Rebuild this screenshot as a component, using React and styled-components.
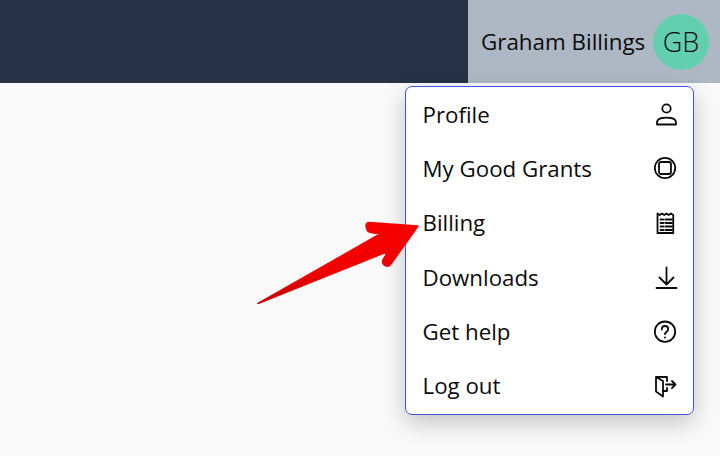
import React from 'react';
import styled, { createGlobalStyle } from 'styled-components';

const GlobalStyle = createGlobalStyle`
  html, body {
    margin: 0;
    padding: 0;
    height: 100%;
    overflow: hidden;
    background: #fafafa;
  }
  body {
    font-family: "Open Sans", "Noto Sans", sans-serif;
    color: #0b0b0b;
  }
`;

const Page = styled.div`
  position: relative;
  width: 720px;
  height: 456px;
  background: #fafafa;
  overflow: hidden;
`;

const Header = styled.header`
  display: flex;
  justify-content: flex-end;
  height: 83px;
  background: #253344;
`;

const UserBox = styled.div`
  display: flex;
  align-items: center;
  justify-content: space-between;
  width: 252px;
  box-sizing: border-box;
  padding: 0 11px 0 13px;
  background: #aeb8c4;
`;

const UserName = styled.span`
  font-size: 22.4px;
  white-space: nowrap;
`;

const Avatar = styled.div`
  display: flex;
  align-items: center;
  justify-content: center;
  flex: none;
  width: 56px;
  height: 56px;
  border-radius: 50%;
  background: #62d0ae;
  font-size: 27px;
  font-weight: 300;
`;

const Menu = styled.ul`
  position: absolute;
  top: 86px;
  left: 405px;
  box-sizing: border-box;
  width: 289px;
  height: 329px;
  margin: 0;
  padding: 0;
  list-style: none;
  background: #fff;
  border: 1px solid #4353e0;
  border-radius: 7px;
  box-shadow: 0 8px 24px rgba(0, 0, 0, 0.22);
`;

const Item = styled.li`
  display: flex;
  align-items: center;
  justify-content: space-between;
  height: 54.3px;
  padding: 0 15px 0 16.500px;
  font-size: 22.3px;
`;

const Icon = styled.svg`
  width: 24px;
  height: 24px;
  fill: none;
  stroke: #0b0b0b;
  stroke-width: 1.800;
  stroke-linecap: round;
  stroke-linejoin: round;
`;

const Arrow = styled.svg`
  position: absolute;
  top: 210px;
  left: 250px;
  width: 180px;
  height: 100px;
`;

const items = [
  {
    label: 'Profile',
    icon: (
      <>
        <circle cx="12.500" cy="6.500" r="4.200" />
        <path d="M3 22.500v-1.500c0-3 2.500-4.600 5-5 3-.5 6-.5 9 0 2.500.4 5 2 5 5v1.500z" />
      </>
    ),
  },
  {
    label: 'My Good Grants',
    icon: (
      <>
        <circle cx="11" cy="12" r="10.200" />
        <rect x="5" y="6" width="12" height="12" rx="2" />
      </>
    ),
  },
  {
    label: 'Billing',
    icon: (
      <>
        <path d="M3.500 2.500l2.250 1.500 2.250-1.500 2.250 1.500 2.250-1.500 2.250 1.500 2.250-1.500 2.250 1.500V22H3.500z" />
        <path d="M6.500 8.500h3M11.500 8.500h6.500M6.500 12h3M11.500 12h6.500M6.500 15.500h3M11.500 15.500h6.500M6.500 19h3M11.500 19h6.500" />
      </>
    ),
  },
  {
    label: 'Downloads',
    icon: (
      <>
        <path d="M12.500 2.500v17M5.500 12.500l7 7 7-7" />
        <path d="M2.500 23h20" />
      </>
    ),
  },
  {
    label: 'Get help',
    icon: (
      <>
        <circle cx="11" cy="12.700" r="10.200" />
        <path d="M7.800 10.500c0-2 1.400-3.500 3.200-3.500s3.200 1.400 3.200 3.200c0 2.600-3.200 2.600-3.200 5" />
        <path d="M11 18.400v.3" />
      </>
    ),
  },
  {
    label: 'Log out',
    icon: (
      <>
        <path d="M13 7V3H2v14.500l7 5V7L2 3" />
        <path d="M9 17h4v-3M12 10.500h9.500M18 7l3.500 3.500L18 14" />
      </>
    ),
  },
];

export default function App() {
  return (
    <Page>
      <GlobalStyle />
      <Header>
        <UserBox>
          <UserName>Graham Billings</UserName>
          <Avatar>GB</Avatar>
        </UserBox>
      </Header>
      <Menu>
        {items.map((item) => (
          <Item key={item.label}>
            {item.label}
            <Icon viewBox="0 0 24 24">{item.icon}</Icon>
          </Item>
        ))}
      </Menu>
      <Arrow viewBox="0 0 180 100">
        <defs>
          <linearGradient id="arrowFill" x1="0.45" y1="0.1" x2="0.65" y2="0.75">
            <stop offset="0" stopColor="#f70000" />
            <stop offset="0.7" stopColor="#f00000" />
            <stop offset="1" stopColor="#c80000" />
          </linearGradient>
        </defs>
        <path
          d="M168 16L119 12.500C114 12.300 116 22 121 22.500L130 24L8 93.500L138 41.500L133.500 49C130 54 137 59 141 54Z"
          fill="url(#arrowFill)"
          stroke="url(#arrowFill)"
          strokeWidth="1.500"
          strokeLinejoin="round"
        />
      </Arrow>
    </Page>
  );
}
